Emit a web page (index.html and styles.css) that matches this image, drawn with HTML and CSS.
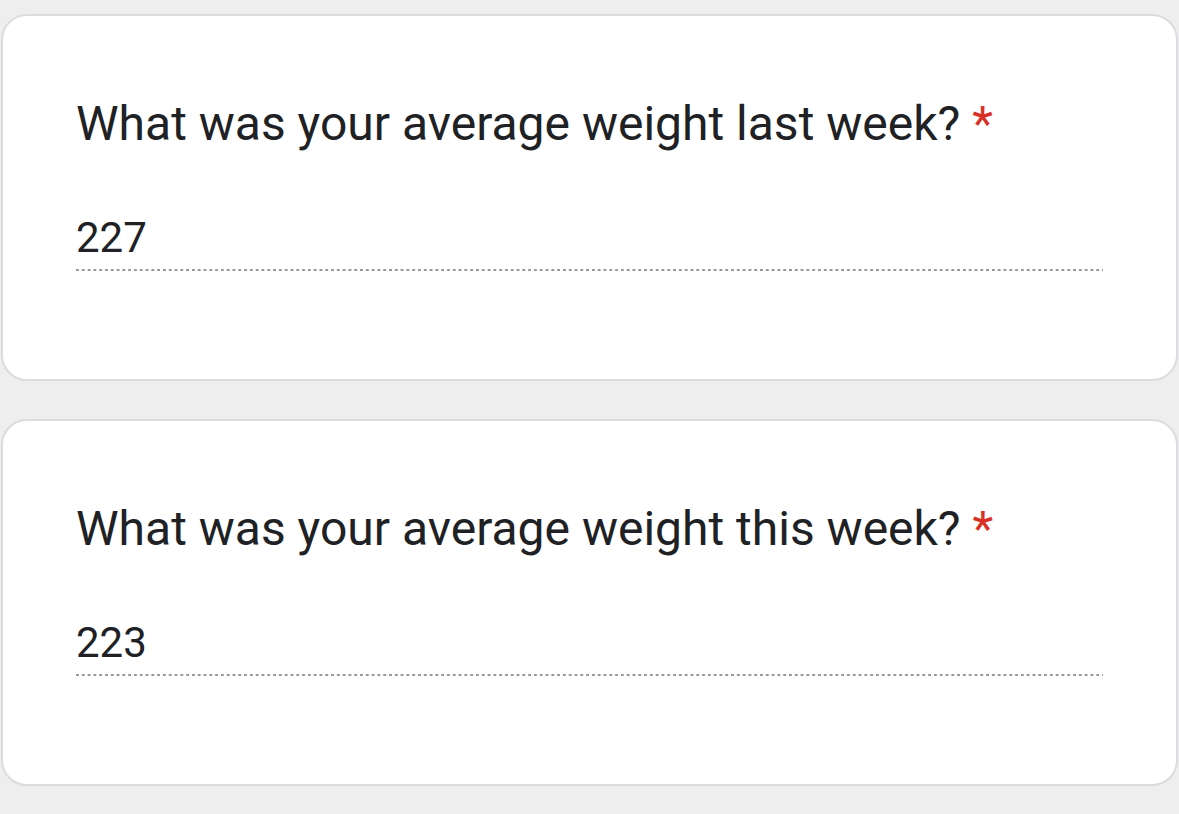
FILE: index.html
```html
<!DOCTYPE html>
<html>
<head>
<meta charset="utf-8">
<link rel="stylesheet" href="styles.css">
</head>
<body>
<div class="page">
  <div class="card">
    <div class="question">What was your average weight last week?<span class="req">*</span></div>
    <div class="answer"><span class="value">227</span></div>
  </div>
  <div class="card">
    <div class="question">What was your average weight this week?<span class="req">*</span></div>
    <div class="answer"><span class="value">223</span></div>
  </div>
</div>
</body>
</html>
```
FILE: styles.css
```css
html, body {
  margin: 0;
  padding: 0;
  background: #eeeeee;
}
.page {
  padding: 14px 1px 0 1px;
  display: flex;
  flex-direction: column;
  gap: 38px;
  font-family: Roboto, "Noto Sans", sans-serif;
  color: #202124;
}
.card {
  background: #ffffff;
  border: 2.5px solid #dadce0;
  border-radius: 26px;
  box-sizing: border-box;
  height: 367px;
  padding: 78px 73px 0 73px;
}
.question {
  font-size: 48px;
  line-height: 60px;
  letter-spacing: 0;
}
.req {
  color: #d93025;
  margin-left: 12px;
}
.answer {
  margin-top: 59px;
  height: 58px;
  font-size: 42px;
  line-height: 50px;
  background-image: linear-gradient(to right, #999999 0, #999999 2.5px, transparent 2.5px);
  background-size: 5.8px 2.5px;
  background-repeat: repeat-x;
  background-position: left bottom;
}
.value {
  display: block;
}
```
